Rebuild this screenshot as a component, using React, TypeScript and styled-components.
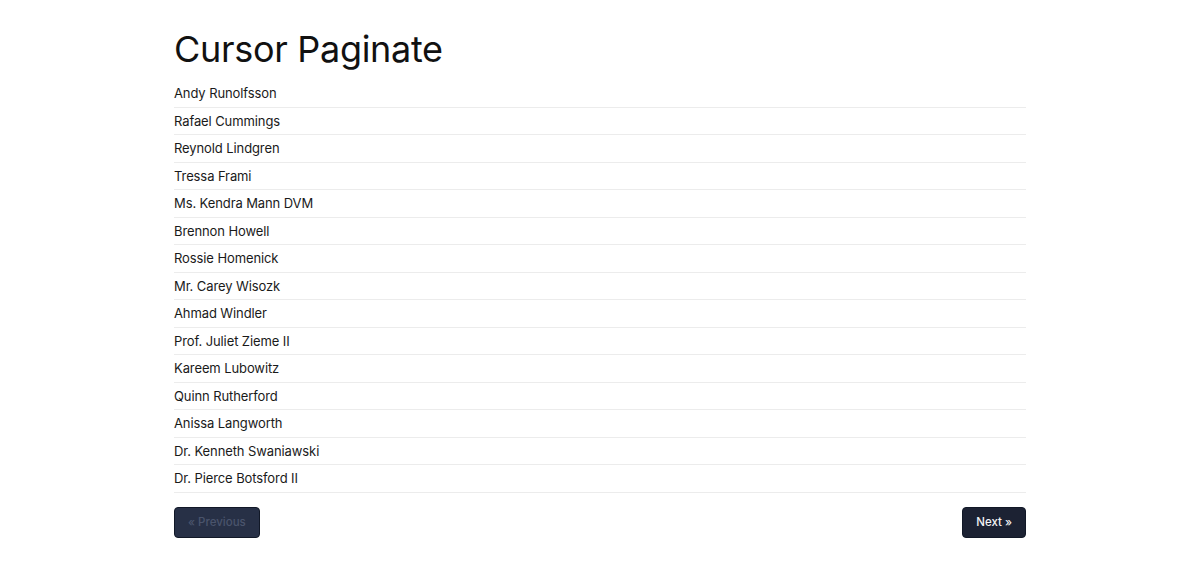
import { createGlobalStyle, styled } from 'styled-components';

const GlobalStyle = createGlobalStyle`
  body {
    margin: 0;
    background: #fff;
    font-family: Inter, "Noto Sans", sans-serif;
    color: #111;
  }
`;

const Page = styled.div`
  width: 852px;
  margin: 0 auto;
  padding-top: 26px;
`;

const Title = styled.h1`
  margin: 0 0 8px;
  font-size: 36px;
  font-weight: 400;
  line-height: 46px;
  letter-spacing: -0.3px;
  color: #111;
`;

const List = styled.ul`
  list-style: none;
  margin: 0;
  padding: 0;
`;

const Row = styled.li`
  height: 27.5px;
  box-sizing: border-box;
  display: flex;
  align-items: center;
  font-size: 13px;
  letter-spacing: -0.1px;
  color: #1a1a1a;
  border-bottom: 1px solid #ececec;
`;

const Footer = styled.div`
  display: flex;
  justify-content: space-between;
  margin-top: 14px;
`;

const Button = styled.button<{ $disabled?: boolean }>`
  height: 31px;
  padding: 0 13px;
  border: 1px solid #111827;
  border-radius: 4px;
  background: ${p => (p.$disabled ? '#273046' : '#1c2233')};
  color: ${p => (p.$disabled ? '#4a546c' : '#f2f3f5')};
  font-family: Inter, "Noto Sans", sans-serif;
  font-size: 11.5px;
  font-weight: 500;
  cursor: ${p => (p.$disabled ? 'default' : 'pointer')};
`;

const names = [
  'Andy Runolfsson',
  'Rafael Cummings',
  'Reynold Lindgren',
  'Tressa Frami',
  'Ms. Kendra Mann DVM',
  'Brennon Howell',
  'Rossie Homenick',
  'Mr. Carey Wisozk',
  'Ahmad Windler',
  'Prof. Juliet Zieme II',
  'Kareem Lubowitz',
  'Quinn Rutherford',
  'Anissa Langworth',
  'Dr. Kenneth Swaniawski',
  'Dr. Pierce Botsford II',
];

export default function App() {
  return (
    <>
      <GlobalStyle />
      <Page>
        <Title>Cursor Paginate</Title>
        <List>
          {names.map(name => (
            <Row key={name}>{name}</Row>
          ))}
        </List>
        <Footer>
          <Button $disabled disabled>« Previous</Button>
          <Button>Next »</Button>
        </Footer>
      </Page>
    </>
  );
}
